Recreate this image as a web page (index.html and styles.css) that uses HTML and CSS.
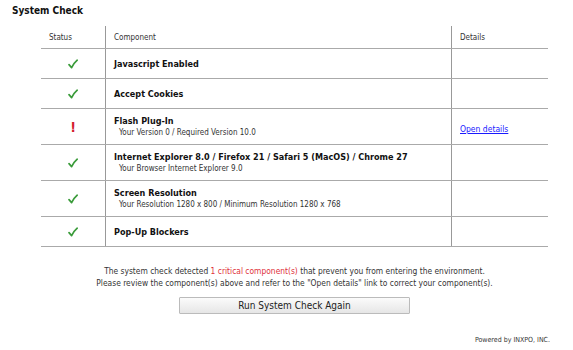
FILE: index.html
```html
<!DOCTYPE html>
<html lang="en">
<head>
    <meta charset="UTF-8">
    <meta name="viewport" content="width=device-width, initial-scale=1.0">
    <title>System Check</title>
    <link rel="stylesheet" href="styles.css">
</head>
<body>
    <div class="page">
        <h1>System Check</h1>

        <table class="check-table">
            <thead>
                <tr>
                    <th class="col-status">Status</th>
                    <th class="col-component">Component</th>
                    <th class="col-details">Details</th>
                </tr>
            </thead>
            <tbody>
                <tr class="single">
                    <td class="status ok"><svg class="tick" viewBox="0 0 10 10"><path d="M1 5.6 L3.6 8.6 Q5.5 4.5 9.2 1.2"/></svg></td>
                    <td><div class="name">Javascript Enabled</div></td>
                    <td></td>
                </tr>
                <tr class="single">
                    <td class="status ok"><svg class="tick" viewBox="0 0 10 10"><path d="M1 5.6 L3.6 8.6 Q5.5 4.5 9.2 1.2"/></svg></td>
                    <td><div class="name">Accept Cookies</div></td>
                    <td></td>
                </tr>
                <tr class="double">
                    <td class="status fail">!</td>
                    <td>
                        <div class="name">Flash Plug-In</div>
                        <div class="info">Your Version 0 / Required Version 10.0</div>
                    </td>
                    <td><a href="#" class="details-link">Open details</a></td>
                </tr>
                <tr class="double">
                    <td class="status ok"><svg class="tick" viewBox="0 0 10 10"><path d="M1 5.6 L3.6 8.6 Q5.5 4.5 9.2 1.2"/></svg></td>
                    <td>
                        <div class="name">Internet Explorer 8.0 / Firefox 21 / Safari 5 (MacOS) / Chrome 27</div>
                        <div class="info">Your Browser Internet Explorer 9.0</div>
                    </td>
                    <td></td>
                </tr>
                <tr class="double">
                    <td class="status ok"><svg class="tick" viewBox="0 0 10 10"><path d="M1 5.6 L3.6 8.6 Q5.5 4.5 9.2 1.2"/></svg></td>
                    <td>
                        <div class="name">Screen Resolution</div>
                        <div class="info">Your Resolution 1280 x 800 / Minimum Resolution 1280 x 768</div>
                    </td>
                    <td></td>
                </tr>
                <tr class="single">
                    <td class="status ok"><svg class="tick" viewBox="0 0 10 10"><path d="M1 5.6 L3.6 8.6 Q5.5 4.5 9.2 1.2"/></svg></td>
                    <td><div class="name">Pop-Up Blockers</div></td>
                    <td></td>
                </tr>
            </tbody>
        </table>

        <div class="summary">
            <p>The system check detected <span class="critical">1 critical component(s)</span> that prevent you from entering the environment.</p>
            <p>Please review the component(s) above and refer to the "Open details" link to correct your component(s).</p>
        </div>

        <div class="actions">
            <button type="button" class="rerun">Run System Check Again</button>
        </div>

        <div class="powered">Powered by INXPO, INC.</div>
    </div>
</body>
</html>
```

FILE: styles.css
```css
body {
    margin: 0;
    background: #fff;
    font-family: "DejaVu Sans Condensed", "DejaVu Sans", Verdana, sans-serif;
    color: #222;
}
.page {
    width: 573px;
    height: 350px;
    overflow: hidden;
}
h1 {
    margin: 0;
    padding: 5px 0 0 12px;
    height: 21px;
    box-sizing: border-box;
    font-size: 10px;
    font-weight: bold;
    color: #111;
}
.check-table {
    margin: 5px 0 0 41px;
    width: 507px;
    border-collapse: collapse;
}
.check-table th {
    height: 22px;
    padding: 0 0 0 8px;
    font-size: 8px;
    font-weight: normal;
    text-align: left;
    color: #333;
    border-bottom: 1px solid #aaa;
}
.check-table td {
    padding: 0 0 0 8px;
    border-bottom: 1px solid #aaa;
    vertical-align: middle;
}
.check-table .col-status {
    width: 56px;
}
.check-table .col-details {
    width: 88px;
}
.check-table th + th,
.check-table td + td {
    border-left: 1px solid #999;
}
.check-table tr.single td {
    height: 29px;
}
.check-table tr.double td {
    height: 35px;
}
.status {
    text-align: center;
    padding: 0 !important;
}
.tick {
    display: block;
    width: 10px;
    height: 10px;
    margin: 0 auto;
}
.tick path {
    fill: none;
    stroke: #3a9b3a;
    stroke-width: 1.7;
    stroke-linecap: round;
    stroke-linejoin: round;
}
.status.fail {
    color: #d42030;
    font-weight: bold;
    font-size: 14px;
}
.name {
    font-size: 9px;
    font-weight: bold;
    color: #111;
}
.info {
    font-size: 8px;
    color: #333;
    padding-left: 5px;
    margin-top: 2px;
}
.details-link {
    font-size: 8.5px;
    color: #1a1aff;
}
.summary {
    margin: 18px 0 0 41px;
    width: 507px;
    text-align: center;
    font-size: 8.4px;
    color: #333;
}
.summary p {
    margin: 0;
    line-height: 12px;
}
.critical {
    color: #e0303a;
}
.actions {
    margin: 5px 0 0 41px;
    width: 507px;
    text-align: center;
}
.rerun {
    width: 231px;
    height: 17px;
    padding: 0;
    font-family: inherit;
    font-size: 10px;
    color: #222;
    background: linear-gradient(#fbfbfb, #e6e6e6);
    border: 1px solid #bbb;
    border-radius: 1px;
}
.powered {
    margin-top: 22px;
    padding-right: 23px;
    text-align: right;
    font-size: 7px;
    line-height: 9px;
    color: #333;
}
```
